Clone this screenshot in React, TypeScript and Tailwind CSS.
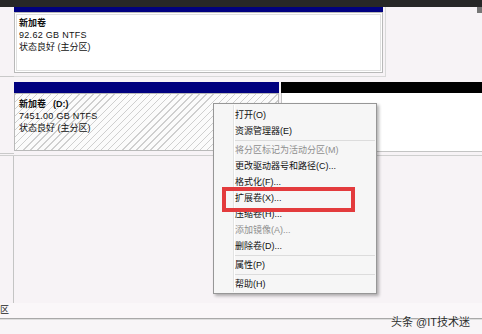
import React from 'react';

type Item = { label: string; disabled?: boolean } | 'sep';

const menuItems: Item[] = [
  { label: '打开(O)' },
  { label: '资源管理器(E)' },
  'sep',
  { label: '将分区标记为活动分区(M)', disabled: true },
  { label: '更改驱动器号和路径(C)...' },
  { label: '格式化(F)...' },
  { label: '扩展卷(X)...' },
  { label: '压缩卷(H)...' },
  { label: '添加镜像(A)...', disabled: true },
  { label: '删除卷(D)...' },
  'sep',
  { label: '属性(P)' },
  'sep',
  { label: '帮助(H)' },
];

const ContextMenu = () => (
  <div className="absolute left-[213px] top-[103px] w-[164px] h-[191px] bg-[#f6f6f6] border border-[#979797] shadow-[2px_2px_3px_rgba(0,0,0,0.3)] pt-[3px]">
    {/* icon gutter */}
    <div className="absolute left-[19px] top-[1px] bottom-[1px] w-[2px] border-l border-[#e2e3e3] bg-white" />
    {menuItems.map((item, i) =>
      item === 'sep' ? (
        <div key={i} className="relative h-[3px] ml-[21px] mr-[1px] py-[1px]">
          <div className="h-[1px] bg-[#dcdcdc]" />
        </div>
      ) : (
        <div
          key={i}
          className={`relative h-[16px] leading-[16px] pl-[21px] text-[9px] whitespace-nowrap ${
            item.disabled ? 'text-[#8e8e8e]' : 'text-[#111]'
          }`}
        >
          {item.label}
        </div>
      )
    )}
  </div>
);

const VolumeText = ({ size, letter }: { size: string; letter?: boolean }) => (
  <div className="pl-[4px] pt-[4px] text-[9px] leading-[12px] text-[#111] whitespace-nowrap">
    <div className="font-bold">
      新加卷
      {letter && <span className="ml-[7px]">(D:)</span>}
    </div>
    <div className="tracking-[0.3px]">{size}</div>
    <div>状态良好 (主分区)</div>
  </div>
);

export default function App() {
  return (
    <div className="relative w-[482px] h-[334px] overflow-hidden bg-[#f7f3f6] font-['Liberation_Sans','Noto_Sans_CJK_SC',sans-serif]">
      {/* top dark strip */}
      <div className="h-[7px] bg-[#272727]" />

      {/* disk 1 */}
      <div className="flex h-[70px]">
        <div className="w-[14px] border-b border-[#c9c9c9]" />
        <div className="w-[372px] flex flex-col pr-[2px] pb-[3px] border-r border-b border-[#d9d9d9]">
          <div className="h-[5px] bg-[#00007f]" />
          <div className="flex-1 bg-white border border-[#b9b9b9] shadow-[inset_0_0_0_1px_#fff,inset_0_0_0_2px_#e0e0e0]">
            <VolumeText size="92.62 GB NTFS" />
          </div>
        </div>
      </div>

      <div className="h-[5px]" />

      {/* disk 2 */}
      <div className="flex h-[74px] border-b border-[#cfcfcf]">
        <div className="w-[14px] h-[72px] border-b border-[#c9c9c9]" />
        <div className="w-[265px] flex flex-col">
          <div className="h-[11px] bg-[#00007f]" />
          <div className="h-[58px] border border-[#b9b9b9] bg-[image:repeating-linear-gradient(135deg,#cfcfcf_0px,#cfcfcf_1px,#fbfbfb_1px,#fbfbfb_5px)]">
            <VolumeText size="7451.00 GB NTFS" letter />
          </div>
        </div>
        <div className="ml-[2px] flex-1 flex flex-col">
          <div className="h-[11px] bg-black" />
          <div className="h-[59px] bg-white border-l border-b border-[#c4c4c4]" />
        </div>
      </div>

      {/* disk 3 (empty) */}
      <div className="flex h-[147px]">
        <div className="w-[14px] border-r border-[#c4c4c4]" />
      </div>

      {/* legend strip */}
      <div className="h-[15px] bg-[#faf7f9] text-[9px] leading-[15px] text-[#222]">区</div>
      <div className="h-[2px] border-t border-[#a9a9a9] bg-[#dedede]" />
      <div className="h-[14px] bg-[#f8f5f7] flex justify-end pr-[12px]">
        <span className="-mt-[5px] text-[11px] leading-[14px] text-[#2b2b2b] [text-shadow:0_0_2px_#fff,0_0_1px_#fff]">
          头条 @IT技术迷
        </span>
      </div>

      {/* scrollbar thumb */}
      <div className="absolute right-0 top-[7px] w-[5px] h-[6px] bg-[#767676]" />

      <ContextMenu />

      {/* highlight box */}
      <div className="absolute left-[222px] top-[187px] w-[133px] h-[25px] border-4 border-[#e33b3d]" />
    </div>
  );
}
